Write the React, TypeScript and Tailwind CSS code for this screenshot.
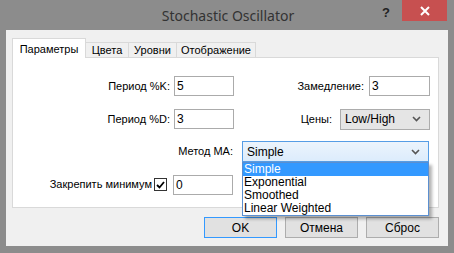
import { useState } from "react";

const FONT = "font-['Tahoma','Liberation_Sans',sans-serif]";

function Chevron() {
  return (
    <svg width="9" height="6" viewBox="0 0 9 6" className="shrink-0">
      <path d="M1 1 L4.5 4.5 L8 1" fill="none" stroke="#555" strokeWidth="1.6" />
    </svg>
  );
}

function TextBox({ value, width }: { value: string; width: string }) {
  return (
    <div
      className={`${width} flex h-[20px] shrink-0 items-center border border-[#ababab] bg-white px-[2px] text-[12px] leading-none`}
    >
      {value}
    </div>
  );
}

const MA_METHODS = ["Simple", "Exponential", "Smoothed", "Linear Weighted"];

export default function App() {
  const [method] = useState("Simple");

  return (
    <div className={`flex h-[253px] w-[454px] flex-col bg-[#8c8c8c] text-black ${FONT}`}>
      {/* title bar */}
      <div className="relative flex h-[30px] shrink-0 items-start">
        <div className="flex h-[30px] flex-1 items-center justify-center pl-[2px] font-['Noto_Sans','Open_Sans',sans-serif] text-[14px] text-[#333]">
          Stochastic Oscillator
        </div>
        <div className="absolute right-0 top-0 flex items-start">
          <span className="mr-[12px] mt-[3px] font-['Liberation_Sans',sans-serif] text-[13px] font-bold text-[#222]">
            ?
          </span>
          <div className="mr-[7px] flex h-[21px] w-[45px] items-center justify-center bg-[#c75050]">
            <svg width="10" height="10" viewBox="0 0 10 10">
              <path d="M1 1 L9 9 M9 1 L1 9" stroke="#fff" strokeWidth="2" />
            </svg>
          </div>
        </div>
      </div>

      {/* client area */}
      <div className="mx-[6px] flex h-[216px] flex-col bg-[#f0f0f0] pl-[6px] pr-[9px] pt-[8px] text-[11px]">
        {/* tabs */}
        <div className="flex h-[19px] items-end">
          <div className="relative z-10 -mb-px flex h-[20px] w-[74px] items-start justify-center border-x border-t border-[#d9d9d9] bg-white pt-[2px]">
            Параметры
          </div>
          <div className="flex h-[15px] w-[43px] items-center justify-center border-r border-t border-[#d9d9d9] bg-[#f0f0f0]">
            Цвета
          </div>
          <div className="flex h-[15px] w-[48px] items-center justify-center border-r border-t border-[#d9d9d9] bg-[#f0f0f0]">
            Уровни
          </div>
          <div className="flex h-[15px] w-[79px] items-center justify-center border-r border-t border-[#d9d9d9] bg-[#f0f0f0]">
            Отображение
          </div>
        </div>

        {/* panel */}
        <div className="flex h-[151px] flex-col border border-[#d9d9d9] bg-white pt-[18px]">
          <div className="flex h-[20px] items-center pr-[8px]">
            <span className="w-[157px] shrink-0 text-right">Период %K:</span>
            <div className="ml-[4px]">
              <TextBox value="5" width="w-[60px]" />
            </div>
            <span className="ml-auto">Замедление:</span>
            <div className="ml-[5px]">
              <TextBox value="3" width="w-[61px]" />
            </div>
          </div>

          <div className="mt-[13px] flex h-[20px] items-center pr-[8px]">
            <span className="w-[157px] shrink-0 text-right">Период %D:</span>
            <div className="ml-[4px]">
              <TextBox value="3" width="w-[60px]" />
            </div>
            <span className="ml-auto">Цены:</span>
            <div className="ml-[8px] flex h-[21px] w-[90px] items-center justify-between border border-[#acacac] bg-[#e5e5e5] pl-[4px] pr-[8px] text-[12px]">
              <span>Low/High</span>
              <Chevron />
            </div>
          </div>

          <div className="mt-[12px] flex h-[21px] items-center">
            <span className="w-[220px] shrink-0 text-right">Метод МА:</span>
            <div className="relative z-20 ml-[9px] text-[12px]">
              <div className="flex h-[21px] w-[187px] items-center justify-between border border-[#569de5] bg-gradient-to-b from-[#ecf4fc] to-[#dcecfc] pl-[4px] pr-[8px]">
                <span>{method}</span>
                <Chevron />
              </div>
              <div className="absolute left-0 top-full w-[187px] border border-[#5b8fd0] bg-white shadow-[3px_3px_3px_rgba(0,0,0,0.3)]">
                {MA_METHODS.map((m) => (
                  <div
                    key={m}
                    className={`h-[13px] pl-[1px] leading-[13px] ${
                      m === method ? "bg-[#3399ff] text-white" : ""
                    }`}
                  >
                    {m}
                  </div>
                ))}
              </div>
            </div>
          </div>

          <div className="mt-[12px] flex h-[21px] items-center">
            <span className="w-[139px] shrink-0 text-right">Закрепить минимум</span>
            <div className="ml-[2px] flex h-[13px] w-[13px] items-center justify-center border border-[#333] bg-white">
              <svg width="9" height="8" viewBox="0 0 9 8">
                <path d="M1 4 L3.5 6.5 L8 1" fill="none" stroke="#000" strokeWidth="1.8" />
              </svg>
            </div>
            <div className="ml-[6px]">
              <TextBox value="0" width="w-[60px]" />
            </div>
          </div>
        </div>

        {/* buttons */}
        <div className="mt-[9px] flex justify-end gap-[8px] text-[12px]">
          <div className="flex h-[21px] w-[73px] items-center justify-center border border-[#3399ff] bg-[#e1e1e1]">
            OK
          </div>
          <div className="flex h-[21px] w-[73px] items-center justify-center border border-[#adadad] bg-[#e1e1e1]">
            Отмена
          </div>
          <div className="flex h-[21px] w-[73px] items-center justify-center border border-[#adadad] bg-[#e1e1e1]">
            Сброс
          </div>
        </div>
      </div>
    </div>
  );
}
